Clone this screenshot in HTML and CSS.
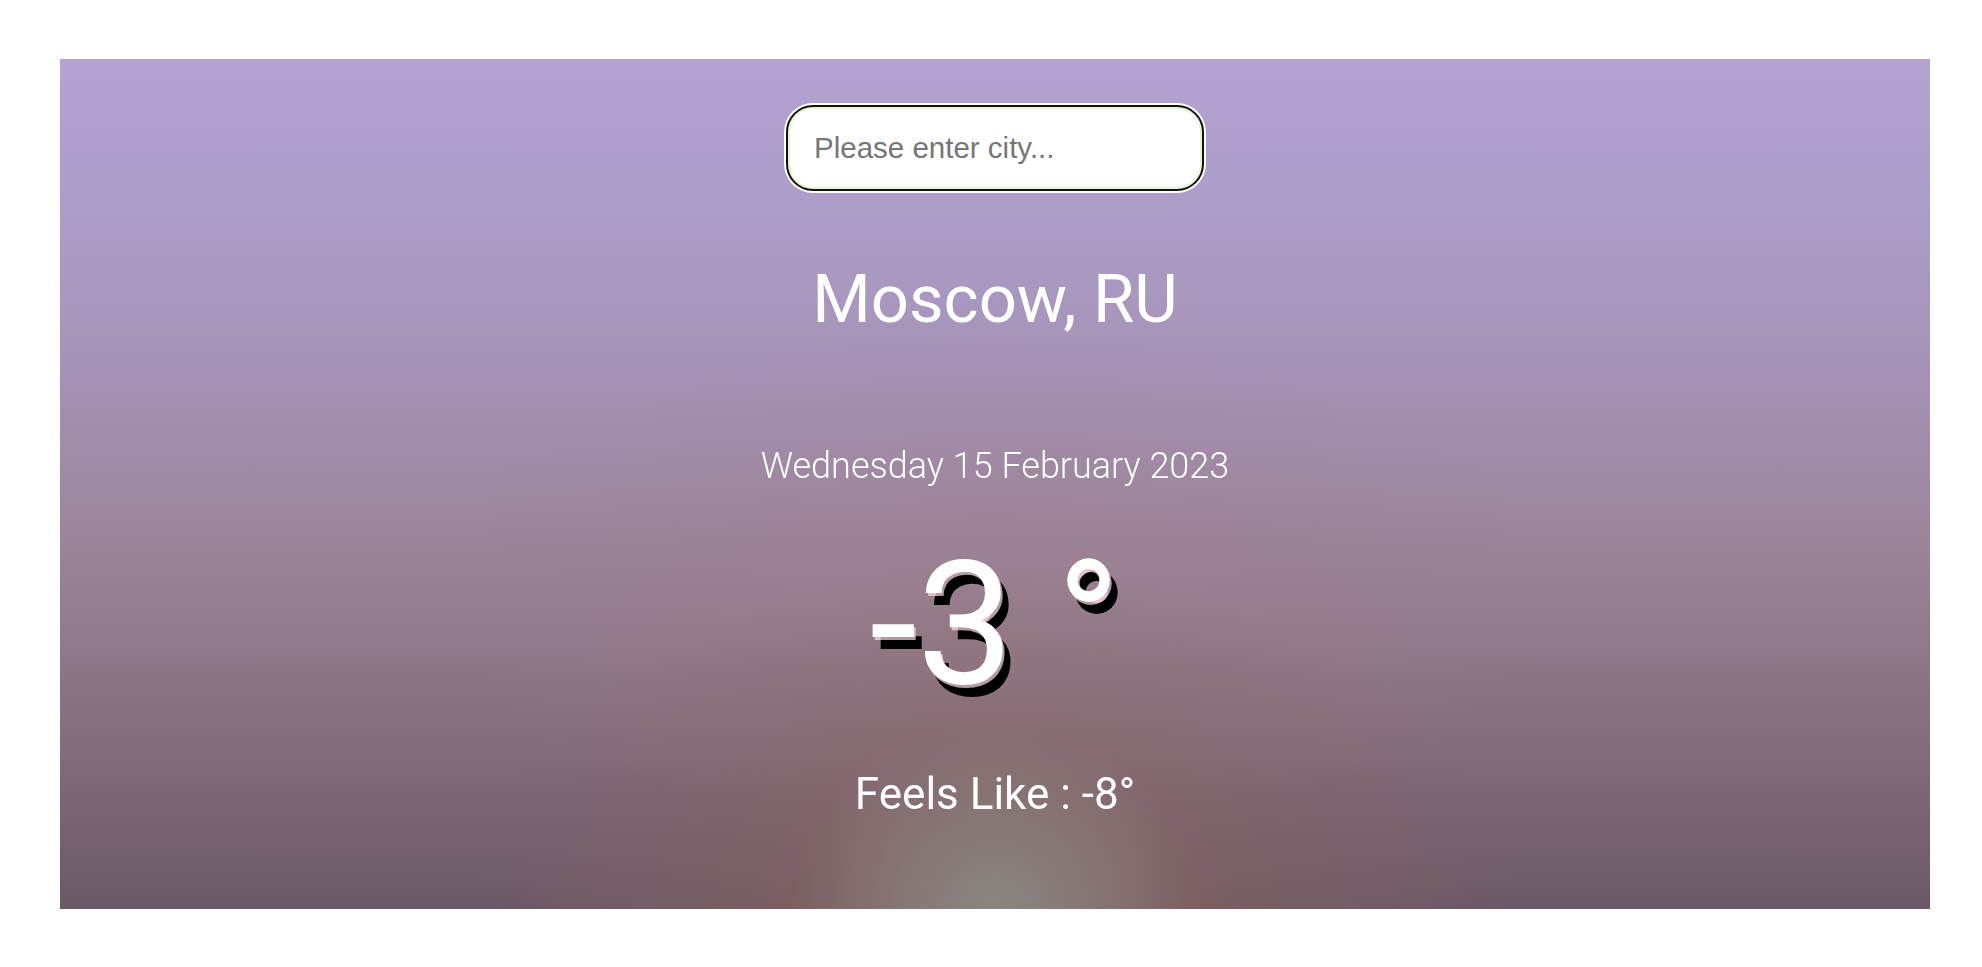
FILE: index.html
```html
<!DOCTYPE html>
<html lang="en">
<head>
<meta charset="utf-8">
<title>Weather</title>
<link rel="stylesheet" href="styles.css">
</head>
<body>
<main class="page">
  <section class="weather">
    <input class="search" type="text" placeholder="Please enter city..." autofocus>
    <h1 class="city">Moscow, RU</h1>
    <p class="date">Wednesday 15 February 2023</p>
    <p class="temp">-3 °</p>
    <p class="feels">Feels Like : -8°</p>
  </section>
</main>
</body>
</html>
```
FILE: styles.css
```css
html, body {
  margin: 0;
  padding: 0;
  background: #ffffff;
}

.page {
  padding: 59px 52px 58px 60px;
}

.weather {
  height: 850px;
  display: flex;
  flex-direction: column;
  align-items: center;
  font-family: Roboto, "Liberation Sans", sans-serif;
  color: #ffffff;
  background:
    radial-gradient(ellipse 11% 22% at 50% 100%, rgba(138,136,132,0.95) 0%, rgba(138,130,126,0.6) 50%, rgba(138,120,115,0) 100%),
    radial-gradient(ellipse 28% 40% at 50% 100%, rgba(140,100,92,0.75) 0%, rgba(135,100,95,0.35) 55%, rgba(130,100,100,0) 100%),
    radial-gradient(ellipse 30% 30% at 50% 62%, rgba(160,125,140,0.35) 0%, rgba(160,125,140,0) 100%),
    linear-gradient(to bottom, #b5a3d2 0%, #ac9cc8 18%, #a592b5 38%, #9a8498 58%, #86707f 78%, #6b5866 100%);
}

.search {
  box-sizing: border-box;
  width: 414px;
  height: 82px;
  margin: 48px 0 0 0;
  padding: 0 20px 0 24px;
  border: 2px solid #e6f5d6;
  border-radius: 25px;
  outline: 2px solid #111111;
  outline-offset: 0;
  box-shadow: 0 0 0 4px #ffffff;
  background: #ffffff;
  font-family: "Liberation Sans", Arial, sans-serif;
  font-size: 29.5px;
  color: #222222;
  caret-color: #000000;
}

.search::placeholder {
  color: #767676;
}

.city {
  margin: 77px 0 0 0;
  font-size: 67px;
  line-height: 67px;
  font-weight: 400;
}

.date {
  margin: 115px 0 0 0;
  font-size: 36px;
  line-height: 36px;
  font-weight: 300;
}

.temp {
  margin: 54px 0 0 0;
  font-size: 172px;
  line-height: 172px;
  font-weight: 400;
  text-shadow: 2px 3px 0 rgba(255, 220, 235, 0.7), 8px 12px 0 #000000;
}

.feels {
  margin: 62px 0 0 0;
  font-size: 44px;
  line-height: 44px;
  font-weight: 400;
}
```
